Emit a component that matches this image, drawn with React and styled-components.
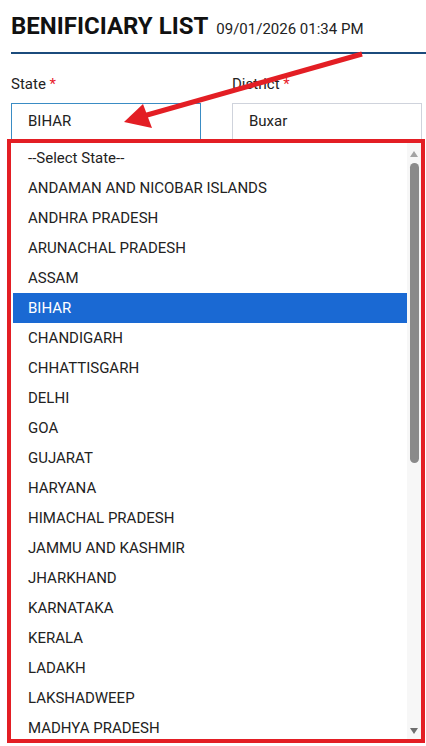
import styled, { createGlobalStyle } from "styled-components";

const states = [
  "--Select State--",
  "ANDAMAN AND NICOBAR ISLANDS",
  "ANDHRA PRADESH",
  "ARUNACHAL PRADESH",
  "ASSAM",
  "BIHAR",
  "CHANDIGARH",
  "CHHATTISGARH",
  "DELHI",
  "GOA",
  "GUJARAT",
  "HARYANA",
  "HIMACHAL PRADESH",
  "JAMMU AND KASHMIR",
  "JHARKHAND",
  "KARNATAKA",
  "KERALA",
  "LADAKH",
  "LAKSHADWEEP",
  "MADHYA PRADESH",
];

function App() {
  return (
    <>
      <Global />
      <Page>
        <Header>
          <Title>BENIFICIARY LIST</Title>
          <Stamp>09/01/2026 01:34 PM</Stamp>
        </Header>
        <Form>
          <Field>
            <Label>
              State <Req>*</Req>
            </Label>
            <Select $focused>BIHAR</Select>
          </Field>
          <Field>
            <Label>
              District <Req>*</Req>
            </Label>
            <Select>Buxar</Select>
          </Field>
        </Form>

        <Popup>
          <List>
            {states.map((s) => (
              <Option key={s} $selected={s === "BIHAR"}>
                {s}
              </Option>
            ))}
          </List>
          <Scrollbar>
            <svg width="10" height="8" viewBox="0 0 10 8">
              <polygon points="5,1 9,7 1,7" fill="#a3a3a3" />
            </svg>
            <Track>
              <Thumb />
            </Track>
            <svg width="10" height="8" viewBox="0 0 10 8">
              <polygon points="1,1 9,1 5,7" fill="#6e6e6e" />
            </svg>
          </Scrollbar>
        </Popup>

        <Arrow width="426" height="746" viewBox="0 0 426 746">
          <line x1="362" y1="54" x2="140" y2="117" stroke="#e31e24" strokeWidth="5" />
          <polygon points="124,122 143,104 152,128" fill="#e31e24" />
        </Arrow>
      </Page>
    </>
  );
}

const Global = createGlobalStyle`
  html, body {
    margin: 0;
    background: #fff;
  }
  body {
    font-family: Roboto, "Liberation Sans", sans-serif;
    color: #222;
  }
`;

const Page = styled.div`
  position: relative;
  width: 426px;
  height: 746px;
  overflow: hidden;
  padding-left: 11px;
  box-sizing: border-box;
`;

const Header = styled.div`
  display: flex;
  align-items: baseline;
  gap: 8px;
  padding: 12px 0 12px;
  border-bottom: 2px solid #1b4b7c;
`;

const Title = styled.h1`
  margin: 0;
  font-size: 24px;
  line-height: 28px;
  font-weight: 700;
  color: #111;
`;

const Stamp = styled.span`
  font-size: 15px;
  color: #222;
`;

const Form = styled.div`
  display: grid;
  grid-template-columns: 1fr 1fr;
  column-gap: 31px;
  padding-right: 4px;
  margin-top: 20px;
`;

const Field = styled.div`
  display: flex;
  flex-direction: column;
  gap: 9px;
`;

const Label = styled.label`
  font-size: 15px;
  line-height: 20px;
  color: #222;
`;

const Req = styled.span`
  color: #e8202a;
`;

const Select = styled.div`
  height: 40px;
  box-sizing: border-box;
  display: flex;
  align-items: center;
  padding: 0 0 4px 16px;
  font-size: 15px;
  color: #222;
  border: 1px solid ${(p) => (p.$focused ? "#3a8cc4" : "#cfd3dc")};
`;

const Popup = styled.div`
  position: absolute;
  left: 7px;
  top: 139px;
  width: 418px;
  height: 604px;
  box-sizing: border-box;
  border: 4px solid #e31e24;
  background: #fff;
  display: flex;
  overflow: hidden;
`;

const List = styled.div`
  flex: 1;
  overflow: hidden;
  padding-left: 2px;
`;

const Option = styled.div`
  height: 30px;
  display: flex;
  align-items: center;
  padding-left: 15px;
  font-size: 15px;
  white-space: nowrap;
  color: ${(p) => (p.$selected ? "#fff" : "#222")};
  background: ${(p) => (p.$selected ? "#1a69d3" : "transparent")};
`;

const Scrollbar = styled.div`
  width: 14px;
  background: #f7f7f7;
  display: flex;
  flex-direction: column;
  align-items: center;
  padding: 7px 0 4px;
  box-sizing: border-box;
  gap: 5px;
`;

const Track = styled.div`
  flex: 1;
  width: 100%;
  display: flex;
  justify-content: center;
`;

const Thumb = styled.div`
  width: 9px;
  height: 300px;
  border-radius: 5px;
  background: #8a8a8a;
`;

const Arrow = styled.svg`
  position: absolute;
  left: 0;
  top: 0;
  pointer-events: none;
`;

export default App;
